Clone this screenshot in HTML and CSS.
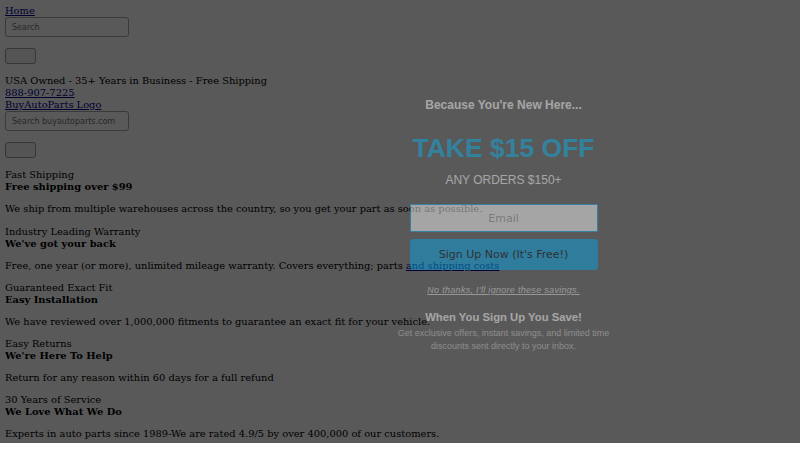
FILE: index.html
```html
<!DOCTYPE html>
<html lang="en">
<head>
    <meta charset="UTF-8">
    <meta name="viewport" content="width=device-width, initial-scale=1.0">
    <title>BuyAutoParts</title>
    <link rel="stylesheet" href="styles.css">
</head>
<body>
    <!-- header -->
    <header class="site-header">
        <a class="nav-link" href="#">Home</a>
        <form class="search-form">
            <input class="search-input" type="text" placeholder="Search">
            <button class="search-btn" type="submit"></button>
        </form>

        <div class="promo-line">USA Owned - 35+ Years in Business - Free Shipping</div>
        <a class="nav-link" href="#">888-907-7225</a>
        <a class="nav-link" href="#">BuyAutoParts Logo</a>
        <form class="search-form search-form--main">
            <input class="search-input" type="text" placeholder="Search buyautoparts.com">
            <button class="search-btn" type="submit"></button>
        </form>
    </header>

    <!-- value props -->
    <section class="features">
        <div class="feature">
            <div class="feature-title">Fast Shipping</div>
            <strong class="feature-head">Free shipping over $99</strong>
            <p>We ship from multiple warehouses across the country, so you get your part as soon as possible.</p>
        </div>
        <div class="feature">
            <div class="feature-title">Industry Leading Warranty</div>
            <strong class="feature-head">We've got your back</strong>
            <p>Free, one year (or more), unlimited mileage warranty. Covers everything; parts <a href="#">and shipping costs</a></p>
        </div>
        <div class="feature">
            <div class="feature-title">Guaranteed Exact Fit</div>
            <strong class="feature-head">Easy Installation</strong>
            <p>We have reviewed over 1,000,000 fitments to guarantee an exact fit for your vehicle.</p>
        </div>
        <div class="feature">
            <div class="feature-title">Easy Returns</div>
            <strong class="feature-head">We're Here To Help</strong>
            <p>Return for any reason within 60 days for a full refund</p>
        </div>
        <div class="feature">
            <div class="feature-title">30 Years of Service</div>
            <strong class="feature-head">We Love What We Do</strong>
            <p>Experts in auto parts since 1989-We are rated 4.9/5 by over 400,000 of our customers.</p>
        </div>
    </section>

    <!-- signup popup -->
    <div class="popup-overlay"></div>
    <div class="popup">
        <div class="popup-kicker">Because You're New Here...</div>
        <div class="popup-offer">TAKE $15 OFF</div>
        <div class="popup-sub">ANY ORDERS $150+</div>
        <form class="popup-form">
            <input class="popup-email" type="email" placeholder="Email">
            <button class="popup-submit" type="submit">Sign Up Now (It's Free!)</button>
        </form>
        <a class="popup-dismiss" href="#">No thanks, I'll ignore these savings.</a>
        <div class="popup-title">When You Sign Up You Save!</div>
        <p class="popup-text">Get exclusive offers, instant savings, and limited time discounts sent directly to your inbox.</p>
    </div>
</body>
</html>
```

FILE: styles.css
```css
body {
    margin: 5px;
    font-family: "DejaVu Serif", serif;
    font-size: 9.9px;
    line-height: 12.08px;
    color: #000;
    background: #fff;
}

a {
    color: #00008f;
}

/* header */
.site-header {
    display: flex;
    flex-direction: column;
    align-items: flex-start;
}

.search-form {
    display: flex;
    flex-direction: column;
    align-items: flex-start;
    margin: 0;
}

.search-input {
    box-sizing: border-box;
    width: 124px;
    height: 20px;
    margin: 0;
    padding: 0 6px;
    border: 1px solid #a6a6a6;
    border-radius: 3px;
    font-family: "DejaVu Sans", sans-serif;
    font-size: 8px;
    color: #333;
}

.search-input::placeholder {
    color: #757575;
}

.search-btn {
    box-sizing: border-box;
    width: 31px;
    height: 16px;
    margin-top: 11px;
    padding: 0;
    background: #efefef;
    border: 1px solid #9a9a9a;
    border-radius: 3px;
}

.promo-line {
    margin-top: 11px;
}

/* features */
.features {
    margin-top: 11px;
}

.feature-title,
.feature-head {
    display: block;
}

.feature p {
    margin: 10px 0;
}

/* popup */
.popup-overlay {
    position: absolute;
    top: 0;
    left: 0;
    width: 100%;
    height: 443px;
    background: rgba(0, 0, 0, 0.65);
}

.popup {
    position: absolute;
    top: 98px;
    left: 388px;
    width: 231px;
    display: flex;
    flex-direction: column;
    align-items: center;
    text-align: center;
    font-family: "Liberation Sans", Arial, sans-serif;
    color: #fff;
    opacity: 0.46;
}

.popup-kicker {
    font-size: 12px;
    line-height: 14px;
    font-weight: bold;
}

.popup-offer {
    margin-top: 21px;
    font-size: 26.5px;
    line-height: 30px;
    font-weight: bold;
    color: #06b4f0;
}

.popup-sub {
    margin-top: 10px;
    font-size: 12px;
    line-height: 14px;
}

.popup-form {
    display: flex;
    flex-direction: column;
    width: 188px;
    margin: 17px 0 0;
}

.popup-email {
    box-sizing: border-box;
    height: 28px;
    margin: 0;
    border: 1px solid #0bb0ee;
    background: #fff;
    font-family: "DejaVu Sans", sans-serif;
    font-size: 11px;
    text-align: center;
}

.popup-email::placeholder {
    color: #a3a3a3;
}

.popup-submit {
    box-sizing: border-box;
    height: 31px;
    margin-top: 7px;
    border: 0;
    border-radius: 3px;
    background: #00a6ec;
    color: #000;
    font-family: "DejaVu Sans", sans-serif;
    font-size: 11px;
}

.popup-dismiss {
    margin-top: 14px;
    font-size: 9px;
    line-height: 12px;
    font-style: italic;
    letter-spacing: 0.3px;
    color: #e0e0e0;
}

.popup-title {
    margin-top: 14px;
    font-size: 11.3px;
    line-height: 14px;
    font-weight: bold;
}

.popup-text {
    margin: 3px 0 0;
    font-size: 9px;
    line-height: 13px;
    color: #cacaca;
}
```
